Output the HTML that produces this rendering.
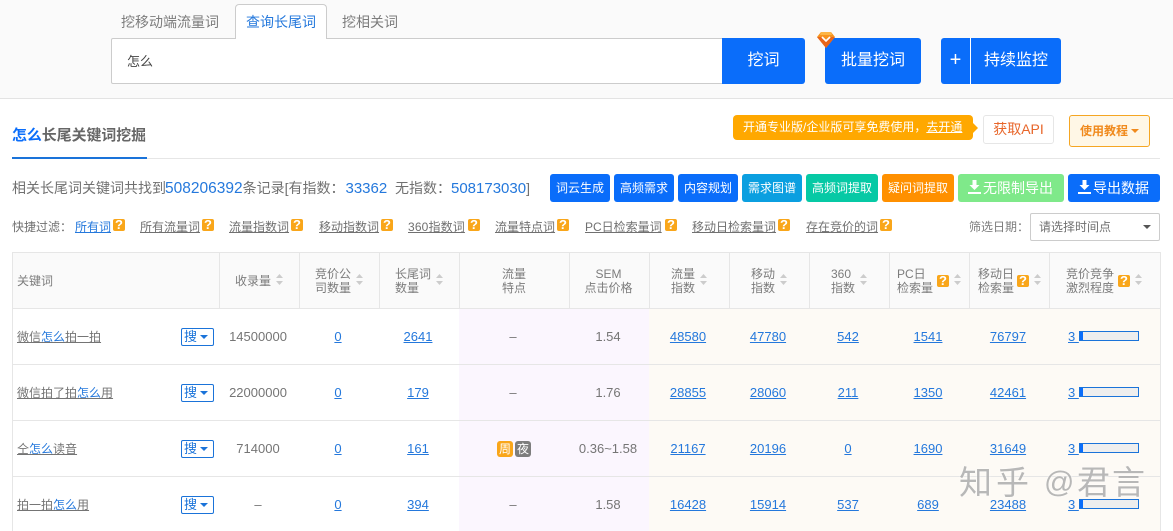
<!DOCTYPE html>
<html lang="zh"><head><meta charset="utf-8"><title>长尾词</title>
<style>
*{box-sizing:border-box}
html,body{margin:0;padding:0}
body{width:1173px;height:531px;overflow:hidden;position:relative;background:#fff;font-family:"Liberation Sans","Noto Sans CJK SC",sans-serif;color:#6e6e6e;font-size:12px}
.a{position:absolute;white-space:nowrap}
.b{position:absolute;color:#fff;text-align:center;border-radius:3px;white-space:nowrap}
.sb{top:174px;height:28px;line-height:28px;font-size:12px;background:#0a6dfa}
a,.u{text-decoration:underline}
.f{top:219px;line-height:16px;font-size:12px;color:#707070;text-decoration:underline}
.q{position:absolute;width:12px;height:12px;background:#f9a61a;border-radius:2px;color:#fff;font-size:13px;font-weight:bold;line-height:12px;text-align:center}
.hl{position:absolute;background:#e6e6e6}
.h{position:absolute;line-height:14px;font-size:12px;color:#7c7c7c;white-space:nowrap}
.s{position:absolute;width:7px;height:11px}
.c{position:absolute;text-align:center;font-size:13px;line-height:16px;white-space:nowrap;color:#757575}
.c.l,.l{color:#2478dc;text-decoration:underline}
.k{position:absolute;left:17px;font-size:12px;line-height:16px;color:#747474;text-decoration:underline;white-space:nowrap}
.k i{font-style:normal;color:#2478dc}
.so{position:absolute;left:181px;width:33px;height:18px;border:1px solid #1a73d9;border-radius:2px;color:#1a73d9;font-size:13px;line-height:16px;padding-left:2px;background:#fff}
.so:after{content:"";position:absolute;right:5px;top:6px;border:4px solid transparent;border-top:4px solid #1a73d9;border-bottom:0}
.bar{position:absolute;left:1079px;width:60px;height:10px;border:1px solid #1a73d9;background:#eee}
.bar:before{content:"";display:block;width:3px;height:8px;background:#0a6dfa}
</style></head><body>
<div class="a" style="left:0;top:0;width:1173px;height:99px;background:#fafafa;border-bottom:1px solid #e3e3e3"></div>
<div class="a" style="left:121px;top:12px;font-size:14px;line-height:20px;color:#7c7c7c">挖移动端流量词</div>
<div class="a" style="left:235px;top:4px;width:92px;height:35px;background:#fff;border:1px solid #ccc;border-bottom:0;border-radius:4px 4px 0 0;z-index:2;text-align:center;font-size:14px;line-height:34px;color:#2478dc">查询长尾词</div>
<div class="a" style="left:342px;top:12px;font-size:14px;line-height:20px;color:#7c7c7c">挖相关词</div>
<div class="a" style="left:111px;top:38px;width:612px;height:46px;background:#fff;border:1px solid #ccc;border-radius:2px 0 0 2px;font-size:13px;line-height:45px;padding-left:15px;color:#444">怎么</div>
<div class="b" style="left:722px;top:38px;width:83px;height:46px;line-height:46px;font-size:16px;background:#0a6dfa;border-radius:0 3px 3px 0">挖词</div>
<div class="b" style="left:825px;top:38px;width:96px;height:46px;line-height:45px;font-size:16px;background:#0a6dfa">批量挖词</div>
<svg class="a" style="left:817px;top:31px" width="18" height="18" viewBox="0 0 18 18"><path d="M4 1H14L18 6 9 17 0 6Z" fill="#f7931e"/><path d="M0 6 9 17 18 6 14 6 9 11 4 6Z" fill="#e8651a"/><path d="M5 6 9 10 13 6" fill="none" stroke="#fff" stroke-width="1.6"/><path d="M4 1H14L15 4H3Z" fill="#fdb545"/></svg>
<div class="b" style="left:941px;top:38px;width:120px;height:46px;background:#0a6dfa"></div>
<div class="b" style="left:941px;top:38px;width:29px;height:46px;line-height:45px;font-size:20px;background:transparent">+</div>
<div class="a" style="left:970px;top:38px;width:1px;height:46px;background:#fff"></div>
<div class="b" style="left:971px;top:38px;width:90px;height:46px;line-height:45px;font-size:16px;background:transparent">持续监控</div>

<div class="a" style="left:12px;top:127px;font-size:14.9px;font-weight:bold;line-height:18px;color:#666"><span style="color:#0a6dfa">怎么</span>长尾关键词挖掘</div>
<div class="a" style="left:12px;top:158px;width:1148px;height:1px;background:#e6e6e6"></div>
<div class="a" style="left:12px;top:157px;width:135px;height:2px;background:#1a73d9"></div>

<div class="a" style="left:733px;top:115px;width:240px;height:25px;background:#ffa800;border-radius:4px;color:#fff;font-size:12px;line-height:25px;padding-left:10px">开通专业版/企业版可享免费使用，<span class="u">去开通</span></div>
<div class="a" style="left:973px;top:123px;border:5px solid transparent;border-left:5px solid #ffa800;border-right:0"></div>
<div class="a" style="left:983px;top:115px;width:71px;height:29px;border:1px solid #e6e6e6;border-radius:3px;background:#fff;text-align:center;font-size:14px;line-height:27px;color:#e8662a">获取API</div>
<div class="a" style="left:1069px;top:115px;width:81px;height:32px;border:1px solid #f5a623;border-radius:3px;background:#fff7e6;font-size:12px;font-weight:bold;line-height:30px;padding-left:10px;color:#f08a1d">使用教程</div>
<div class="a" style="left:1131px;top:129px;border:4px solid transparent;border-top:4px solid #f08a1d;border-bottom:0"></div>

<div class="a" style="left:12px;top:177px;font-size:14px;line-height:22px;color:#707070">相关长尾词关键词共找到<span style="color:#2478dc;font-size:15.5px;margin-left:-1px">508206392</span>条记录[有指数：<span style="color:#2478dc;font-size:15px;margin-left:1px">33362</span>&nbsp; 无指数：<span style="color:#2478dc;font-size:15px">508173030</span>]</div>

<div class="b sb" style="left:550px;width:60px">词云生成</div>
<div class="b sb" style="left:614px;width:60px">高频需求</div>
<div class="b sb" style="left:678px;width:60px">内容规划</div>
<div class="b sb" style="left:742px;width:60px;background:#0b9fe0">需求图谱</div>
<div class="b sb" style="left:806px;width:72px;background:#06c9a5">高频词提取</div>
<div class="b sb" style="left:882px;width:72px;background:#ff9000">疑问词提取</div>
<div class="b sb" style="left:958px;width:106px;background:#7fe98a;font-size:14px;padding-left:14px">无限制导出</div>
<svg class="a" style="left:968px;top:180px" width="13" height="14" viewBox="0 0 13 14"><path d="M4.500 0H8.500V5H11.500L6.500 10 1.500 5H4.500ZM0 12H13V14H0Z" fill="#fff"/></svg>
<div class="b sb" style="left:1068px;width:92px;font-size:14px;padding-left:14px">导出数据</div>
<svg class="a" style="left:1078px;top:180px" width="13" height="14" viewBox="0 0 13 14"><path d="M4.500 0H8.500V5H11.500L6.500 10 1.500 5H4.500ZM0 12H13V14H0Z" fill="#fff"/></svg>

<div class="a" style="left:12px;top:219px;line-height:16px;color:#707070">快捷过滤：</div>
<div class="a f" style="left:75px;color:#2478dc">所有词</div><div class="q" style="left:113px;top:219px">?</div>
<div class="a f" style="left:140px">所有流量词</div><div class="q" style="left:202px;top:219px">?</div>
<div class="a f" style="left:229px">流量指数词</div><div class="q" style="left:291px;top:219px">?</div>
<div class="a f" style="left:319px">移动指数词</div><div class="q" style="left:381px;top:219px">?</div>
<div class="a f" style="left:408px;letter-spacing:.15px">360指数词</div><div class="q" style="left:468px;top:219px">?</div>
<div class="a f" style="left:495px">流量特点词</div><div class="q" style="left:557px;top:219px">?</div>
<div class="a f" style="left:585px">PC日检索量词</div><div class="q" style="left:665px;top:219px">?</div>
<div class="a f" style="left:692px">移动日检索量词</div><div class="q" style="left:778px;top:219px">?</div>
<div class="a f" style="left:806px">存在竞价的词</div><div class="q" style="left:880px;top:219px">?</div>
<div class="a" style="left:969px;top:219px;line-height:16px;color:#7c7c7c">筛选日期：</div>
<div class="a" style="left:1030px;top:213px;width:130px;height:28px;border:1px solid #ccc;border-radius:2px;background:#fff;line-height:26px;padding-left:8px;color:#707070">请选择时间点</div>
<div class="a" style="left:1143px;top:225px;border:4px solid transparent;border-top:4px solid #555;border-bottom:0"></div>

<!-- table backgrounds -->
<div class="a" style="left:12px;top:253px;width:1149px;height:56px;background:#fafafa"></div>
<div class="a" style="left:459px;top:309px;width:190px;height:222px;background:#fbf6fe"></div>
<div class="a" style="left:649px;top:309px;width:511px;height:222px;background:#fdfaf5"></div>
<div class="hl" style="left:12px;top:252px;width:1149px;height:1px"></div>
<div class="hl" style="left:12px;top:308px;width:1149px;height:1px"></div>
<div class="hl" style="left:12px;top:364px;width:1149px;height:1px"></div>
<div class="hl" style="left:12px;top:420px;width:1149px;height:1px"></div>
<div class="hl" style="left:12px;top:476px;width:1149px;height:1px"></div>
<div class="hl" style="left:12px;top:252px;width:1px;height:279px"></div>
<div class="hl" style="left:1160px;top:252px;width:1px;height:279px"></div>
<div class="hl" style="left:219px;top:253px;width:1px;height:55px"></div>
<div class="hl" style="left:299px;top:253px;width:1px;height:55px"></div>
<div class="hl" style="left:379px;top:253px;width:1px;height:55px"></div>
<div class="hl" style="left:459px;top:253px;width:1px;height:55px"></div>
<div class="hl" style="left:569px;top:253px;width:1px;height:55px"></div>
<div class="hl" style="left:649px;top:253px;width:1px;height:55px"></div>
<div class="hl" style="left:729px;top:253px;width:1px;height:55px"></div>
<div class="hl" style="left:809px;top:253px;width:1px;height:55px"></div>
<div class="hl" style="left:889px;top:253px;width:1px;height:55px"></div>
<div class="hl" style="left:969px;top:253px;width:1px;height:55px"></div>
<div class="hl" style="left:1049px;top:253px;width:1px;height:55px"></div>

<!-- header -->
<div class="h" style="left:17px;top:274px">关键词</div>
<div class="h" style="left:235px;top:274px">收录量</div>
<div class="h" style="left:315px;top:267px">竞价公<br>司数量</div>
<div class="h" style="left:395px;top:267px">长尾词<br>数量</div>
<div class="h" style="left:459px;width:110px;text-align:center;top:267px">流量<br>特点</div>
<div class="h" style="left:569px;width:79px;text-align:center;top:267px">SEM<br>点击价格</div>
<div class="h" style="left:671px;top:267px">流量<br>指数</div>
<div class="h" style="left:751px;top:267px">移动<br>指数</div>
<div class="h" style="left:831px;top:267px">360<br>指数</div>
<div class="h" style="left:897px;top:267px">PC日<br>检索量</div>
<div class="h" style="left:978px;top:267px">移动日<br>检索量</div>
<div class="h" style="left:1066px;top:267px">竞价竞争<br>激烈程度</div>
<div class="q" style="left:937px;top:275px">?</div>
<div class="q" style="left:1017px;top:275px">?</div>
<div class="q" style="left:1118px;top:275px">?</div>
<svg class="s" style="left:276px;top:274px" viewBox="0 0 7 11"><path d="M3.500 0 7 4H0ZM0 7H7L3.500 11Z" fill="#ccc"/></svg>
<svg class="s" style="left:356px;top:274px" viewBox="0 0 7 11"><path d="M3.500 0 7 4H0ZM0 7H7L3.500 11Z" fill="#ccc"/></svg>
<svg class="s" style="left:436px;top:274px" viewBox="0 0 7 11"><path d="M3.500 0 7 4H0ZM0 7H7L3.500 11Z" fill="#ccc"/></svg>
<svg class="s" style="left:700px;top:274px" viewBox="0 0 7 11"><path d="M3.500 0 7 4H0ZM0 7H7L3.500 11Z" fill="#ccc"/></svg>
<svg class="s" style="left:780px;top:274px" viewBox="0 0 7 11"><path d="M3.500 0 7 4H0ZM0 7H7L3.500 11Z" fill="#ccc"/></svg>
<svg class="s" style="left:860px;top:274px" viewBox="0 0 7 11"><path d="M3.500 0 7 4H0ZM0 7H7L3.500 11Z" fill="#ccc"/></svg>
<svg class="s" style="left:954px;top:274px" viewBox="0 0 7 11"><path d="M3.500 0 7 4H0ZM0 7H7L3.500 11Z" fill="#ccc"/></svg>
<svg class="s" style="left:1034px;top:274px" viewBox="0 0 7 11"><path d="M3.500 0 7 4H0ZM0 7H7L3.500 11Z" fill="#ccc"/></svg>
<svg class="s" style="left:1135px;top:274px" viewBox="0 0 7 11"><path d="M3.500 0 7 4H0ZM0 7H7L3.500 11Z" fill="#ccc"/></svg>

<!-- row 1 -->
<div class="k" style="top:329px">微信<i>怎么</i>拍一拍</div><div class="so" style="top:328px">搜</div>
<div class="c" style="left:218px;width:80px;top:329px">14500000</div>
<div class="c l" style="left:298px;width:80px;top:329px">0</div>
<div class="c l" style="left:378px;width:80px;top:329px">2641</div>
<div class="c" style="left:458px;width:110px;top:329px">–</div>
<div class="c" style="left:568px;width:80px;top:329px">1.54</div>
<div class="c l" style="left:648px;width:80px;top:329px">48580</div>
<div class="c l" style="left:728px;width:80px;top:329px">47780</div>
<div class="c l" style="left:808px;width:80px;top:329px">542</div>
<div class="c l" style="left:888px;width:80px;top:329px">1541</div>
<div class="c l" style="left:968px;width:80px;top:329px">76797</div>
<div class="c l" style="left:1068px;top:329px">3&nbsp;</div><div class="bar" style="top:331px"></div>
<!-- row 2 -->
<div class="k" style="top:385px">微信拍了拍<i>怎么</i>用</div><div class="so" style="top:384px">搜</div>
<div class="c" style="left:218px;width:80px;top:385px">22000000</div>
<div class="c l" style="left:298px;width:80px;top:385px">0</div>
<div class="c l" style="left:378px;width:80px;top:385px">179</div>
<div class="c" style="left:458px;width:110px;top:385px">–</div>
<div class="c" style="left:568px;width:80px;top:385px">1.76</div>
<div class="c l" style="left:648px;width:80px;top:385px">28855</div>
<div class="c l" style="left:728px;width:80px;top:385px">28060</div>
<div class="c l" style="left:808px;width:80px;top:385px">211</div>
<div class="c l" style="left:888px;width:80px;top:385px">1350</div>
<div class="c l" style="left:968px;width:80px;top:385px">42461</div>
<div class="c l" style="left:1068px;top:385px">3&nbsp;</div><div class="bar" style="top:387px"></div>
<!-- row 3 -->
<div class="k" style="top:441px">仝<i>怎么</i>读音</div><div class="so" style="top:440px">搜</div>
<div class="c" style="left:218px;width:80px;top:441px">714000</div>
<div class="c l" style="left:298px;width:80px;top:441px">0</div>
<div class="c l" style="left:378px;width:80px;top:441px">161</div>
<div class="b" style="left:497px;top:441px;width:16px;height:16px;background:#f9a61a;font-size:12px;line-height:16px">周</div>
<div class="b" style="left:515px;top:441px;width:16px;height:16px;background:#7d7d7d;font-size:12px;line-height:16px">夜</div>
<div class="c" style="left:568px;width:80px;top:441px">0.36~1.58</div>
<div class="c l" style="left:648px;width:80px;top:441px">21167</div>
<div class="c l" style="left:728px;width:80px;top:441px">20196</div>
<div class="c l" style="left:808px;width:80px;top:441px">0</div>
<div class="c l" style="left:888px;width:80px;top:441px">1690</div>
<div class="c l" style="left:968px;width:80px;top:441px">31649</div>
<div class="c l" style="left:1068px;top:441px">3&nbsp;</div><div class="bar" style="top:443px"></div>
<!-- row 4 -->
<div class="k" style="top:497px">拍一拍<i>怎么</i>用</div><div class="so" style="top:496px">搜</div>
<div class="c" style="left:218px;width:80px;top:497px">–</div>
<div class="c l" style="left:298px;width:80px;top:497px">0</div>
<div class="c l" style="left:378px;width:80px;top:497px">394</div>
<div class="c" style="left:458px;width:110px;top:497px">–</div>
<div class="c" style="left:568px;width:80px;top:497px">1.58</div>
<div class="c l" style="left:648px;width:80px;top:497px">16428</div>
<div class="c l" style="left:728px;width:80px;top:497px">15914</div>
<div class="c l" style="left:808px;width:80px;top:497px">537</div>
<div class="c l" style="left:888px;width:80px;top:497px">689</div>
<div class="c l" style="left:968px;width:80px;top:497px">23488</div>
<div class="c l" style="left:1068px;top:497px">3&nbsp;</div><div class="bar" style="top:499px"></div>

<div class="a" style="left:959px;top:461px;font-size:33px;line-height:44px;letter-spacing:4px;color:rgba(150,150,150,.68);text-shadow:0 0 2px #fff;z-index:5">知乎</div>
<div class="a" style="left:1044px;top:461px;font-size:30px;line-height:44px;color:rgba(150,150,150,.68);text-shadow:0 0 2px #fff;z-index:5">@</div>
<div class="a" style="left:1077px;top:461px;font-size:33px;line-height:44px;letter-spacing:2px;color:rgba(150,150,150,.68);text-shadow:0 0 2px #fff;z-index:5">君言</div>
</body></html>
